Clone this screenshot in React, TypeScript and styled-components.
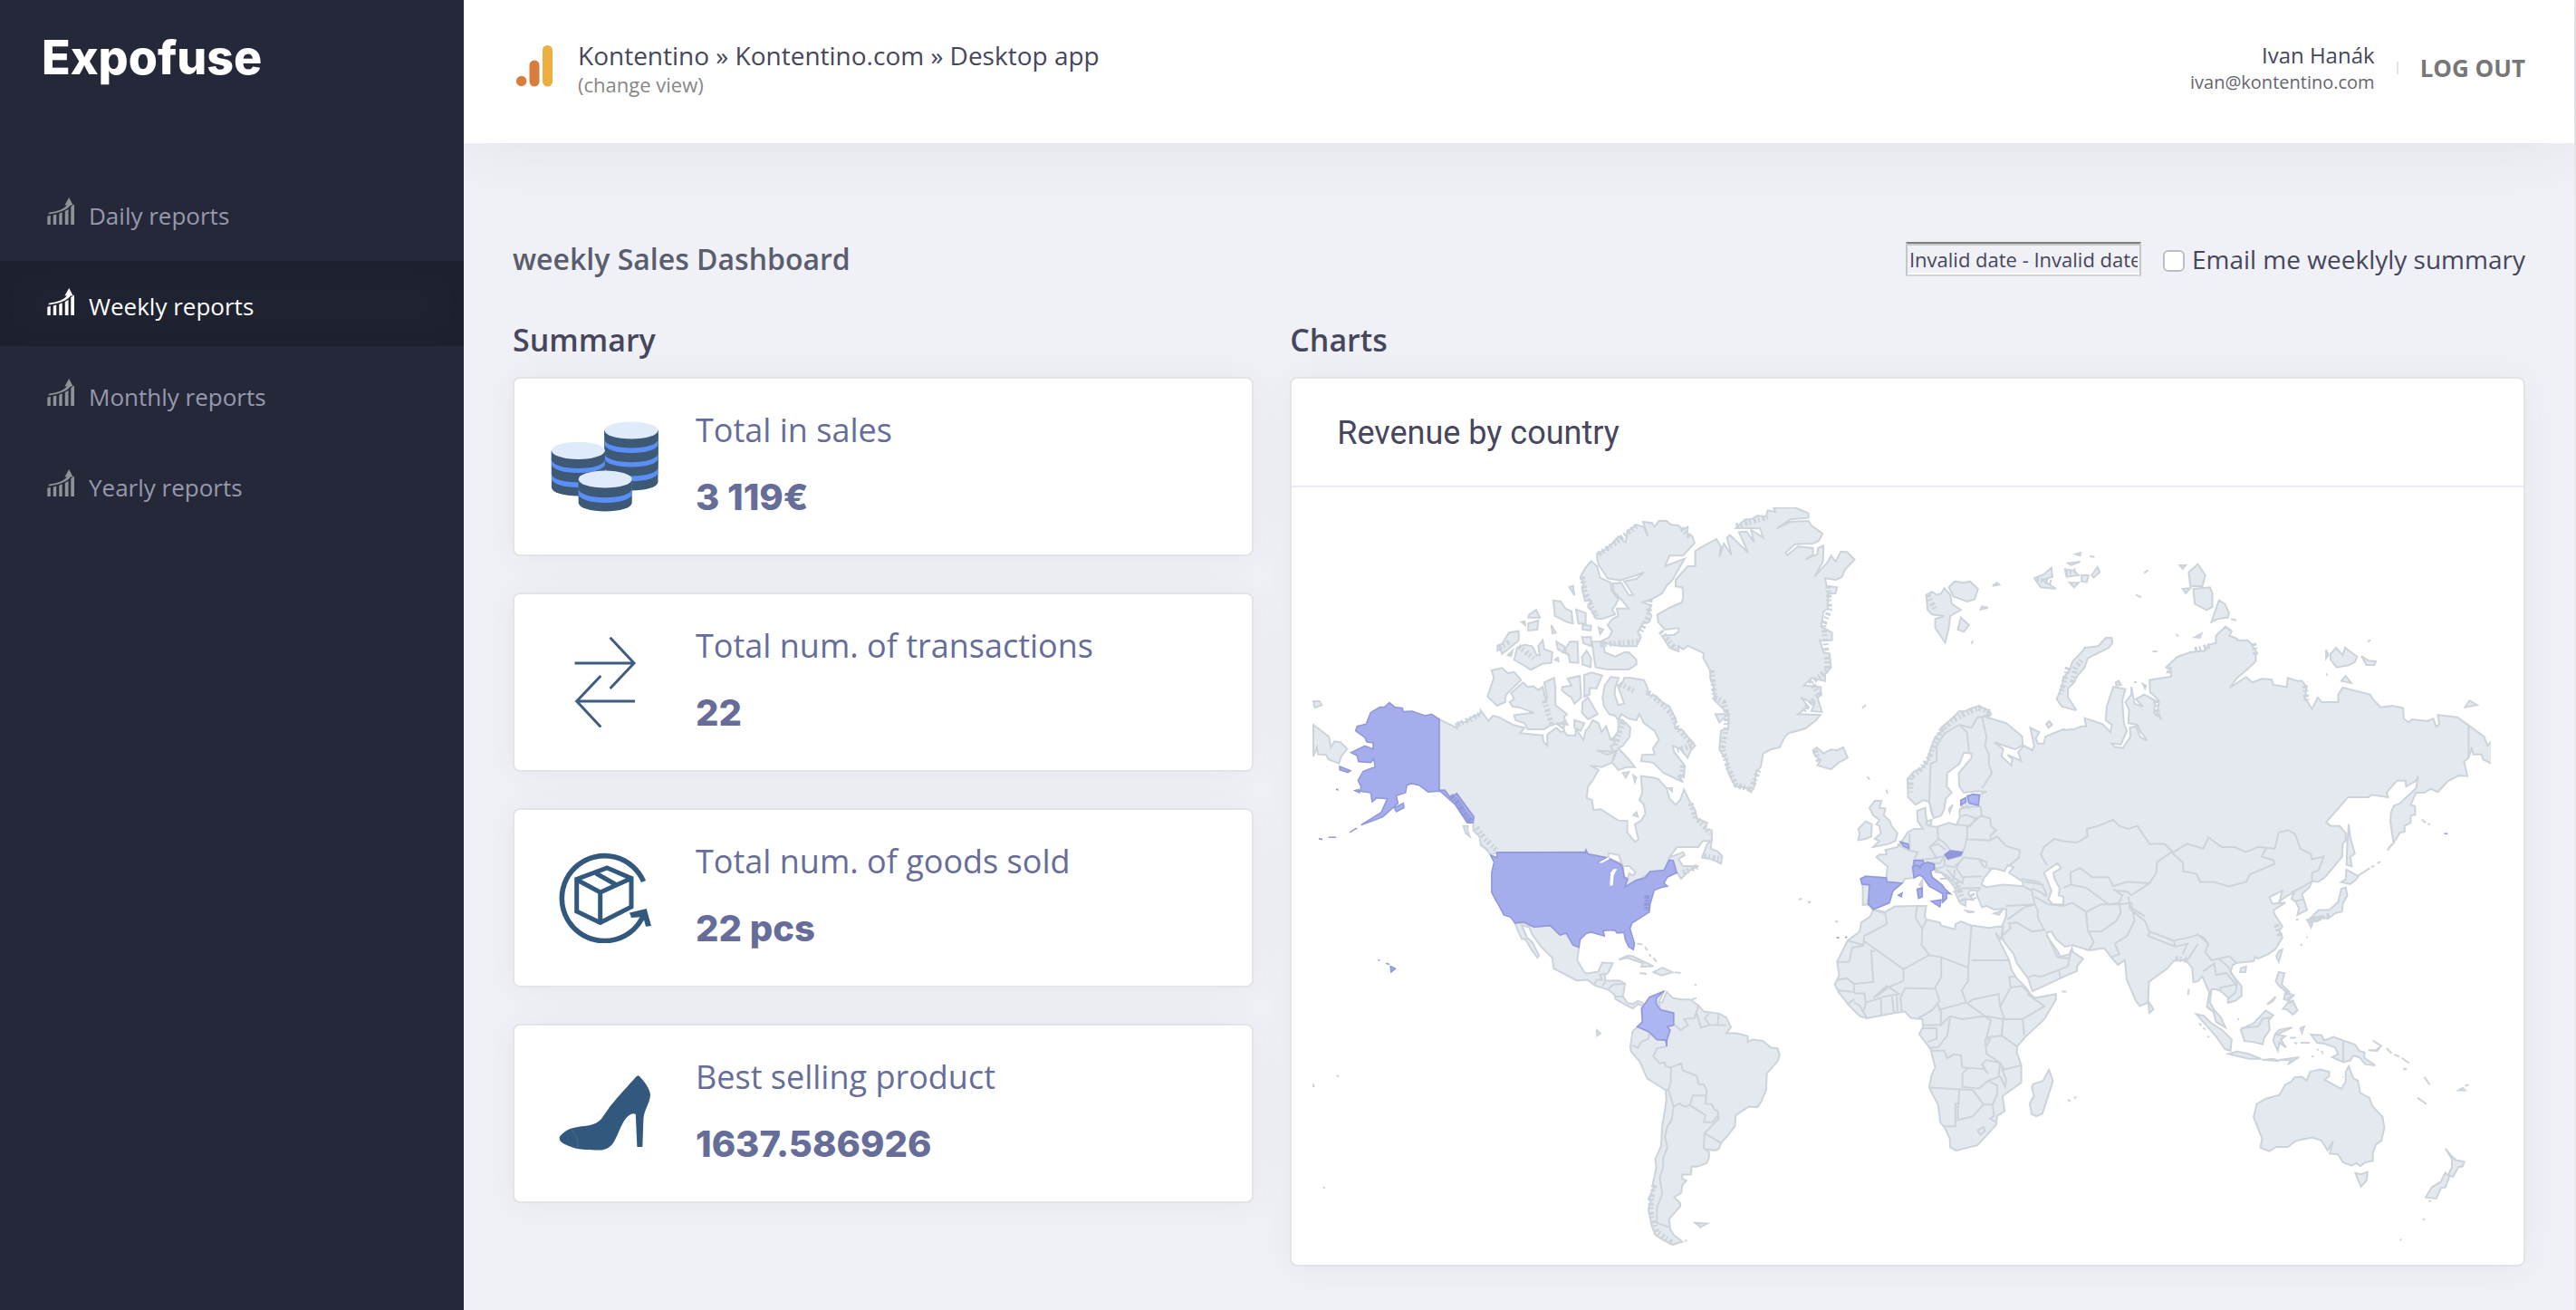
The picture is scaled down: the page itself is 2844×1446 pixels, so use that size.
import React from 'react';
import styled, { createGlobalStyle } from 'styled-components';

const sans = "'Open Sans', 'Noto Sans', sans-serif";
const display = "Inter, 'Open Sans', sans-serif";

const GlobalStyle = createGlobalStyle`
  *, *::before, *::after { box-sizing: border-box; }
  body {
    margin: 0;
    background: #f0f1f6;
    color: #46465c;
    font-family: ${sans};
  }
  h1, h2, h3, p, ul { margin: 0; padding: 0; }
`;

/* ---------- layout ---------- */

const Shell = styled.div`
  display: grid;
  grid-template-columns: 512px minmax(0, 1fr);
  min-height: 100vh;
`;

const Sidebar = styled.aside`
  z-index: 1;
  background: #252838;
  padding-top: 32px;
`;

const Logo = styled.a`
  display: block;
  padding: 0 46px;
  color: #fff;
  font-family: ${display};
  font-size: 52px;
  font-weight: 800;
  line-height: 64px;
  text-decoration: none;
`;

const NavList = styled.ul`
  display: grid;
  gap: 6px;
  margin-top: 92px;
  list-style: none;
`;

const NavLink = styled.a<{ $active?: boolean }>`
  display: flex;
  align-items: baseline;
  gap: 16px;
  height: 94px;
  padding: 30px 52px 0;
  color: ${(p) => (p.$active ? '#fff' : '#9899ac')};
  background: ${(p) => (p.$active ? '#202331' : 'transparent')};
  box-shadow: ${(p) => (p.$active ? 'inset 0 0 50px rgba(20, 20, 40, 0.25)' : 'none')};
  font-size: 26px;
  line-height: 36px;
  text-decoration: none;

  svg { color: ${(p) => (p.$active ? '#fff' : '#8e9196')}; }
`;

const Main = styled.main`
  border-right: 2px solid #e9e9ec;
`;

const Header = styled.header`
  display: flex;
  align-items: center;
  justify-content: space-between;
  height: 158px;
  padding: 0 54px 8px 58px;
  background: #fff;
  box-shadow: 0 0 80px rgba(69, 65, 78, 0.09);
`;

const HeaderGroup = styled.div<{ $gap: number }>`
  display: flex;
  align-items: center;
  gap: ${(p) => p.$gap}px;
`;

const ViewPath = styled.p`
  font-size: 28px;
  line-height: 36px;
`;

const ViewLink = styled.a`
  display: block;
  color: #868686;
  font-size: 22px;
  line-height: 28px;
  text-decoration: none;
`;

const UserBlock = styled.div`
  text-align: right;
`;

const UserName = styled.p`
  font-size: 24px;
  line-height: 32px;
`;

const UserMail = styled.p`
  color: #66666f;
  font-size: 20px;
  line-height: 28px;
`;

const Separator = styled.span`
  width: 2px;
  height: 14px;
  background: #e4e4e8;
`;

const LogoutButton = styled.button`
  padding: 0;
  border: 0;
  background: none;
  color: #777;
  font: 700 26px/36px ${sans};
  cursor: pointer;
`;

const Content = styled.div`
  padding: 106px 54px 40px;
`;

const Toolbar = styled.div`
  display: flex;
  align-items: center;
  justify-content: space-between;
  margin-bottom: 44px;
`;

const PageTitle = styled.h1`
  color: #5a5d6e;
  font-size: 32px;
  font-weight: 600;
  line-height: 44px;
`;

const Filters = styled.div`
  display: flex;
  align-items: center;
  gap: 24px;
`;

const DateInput = styled.input`
  width: 260px;
  height: 38px;
  padding: 0 2px;
  border: 2px solid;
  border-color: #7e7e7e #c6c6c6 #d4d4d6;
  border-radius: 0;
  background: transparent;
  box-shadow: inset 0 2px 0 #c8c8ca, inset 0 -2px 0 #fff;
  color: #46465c;
  font: 22px ${sans};
`;

const CheckLabel = styled.label`
  display: flex;
  align-items: center;
  gap: 8px;
  font-size: 28px;
  line-height: 38px;
`;

const Checkbox = styled.input`
  appearance: none;
  width: 24px;
  height: 24px;
  margin: 4px 0 0;
  border: 2px solid #bdbdc0;
  border-radius: 6px;
  background: #fff;
`;

const Columns = styled.div`
  display: grid;
  grid-template-columns: minmax(0, 3fr) minmax(0, 5fr);
  align-items: start;
  gap: 40px;
`;

const SectionTitle = styled.h2`
  margin-bottom: 18px;
  font-size: 34px;
  font-weight: 600;
  line-height: 46px;
`;

const Card = styled.div`
  border: 2px solid #e4e4e6;
  border-radius: 8px;
  background: #fff;
  box-shadow: 0 2px 40px rgba(69, 65, 78, 0.06);
`;

const CardStack = styled.div`
  display: grid;
  gap: 40px;
`;

const StatCard = styled(Card)`
  display: flex;
  align-items: center;
  gap: 40px;
  height: 198px;
  padding: 0 40px;
`;

const StatText = styled.div`
  display: grid;
  gap: 20px;
  color: #666d99;
`;

const StatLabel = styled.h3`
  font-size: 36px;
  font-weight: 400;
  line-height: 48px;
`;

const StatValue = styled.p`
  font-family: ${display};
  font-size: 40px;
  font-weight: 800;
  line-height: 60px;
`;

const ChartTitle = styled.h3`
  padding: 36px 50px 34px;
  border-bottom: 2px solid #ebecf1;
  font-family: Roboto, ${sans};
  font-size: 36px;
  font-weight: 400;
  line-height: 48px;
`;

const MapFrame = styled.div`
  padding: 22px 36px 20px 23px;
`;

const MapSvg = styled.svg`
  display: block;
  width: 100%;
  height: auto;
`;

/* ---------- icons ---------- */

const TrendIcon = () => (
  <svg width="30" height="30" viewBox="0 0 88 88" fill="currentColor" aria-hidden="true">
    <path d="M1 61l10-3v30H1zM20 57l10-3v34H20zM39 52l10-4v40H39zM58 44l11-6v50H58zM77 30l11-8v66H77z" />
    <path d="M5 49C36 44 55 38 64 24L57 25 71 0l13 25h-8C66 40 40 50 5 54z" />
  </svg>
);

const AnalyticsIcon = () => (
  <svg width="40" height="50" viewBox="0 0 40 50" aria-hidden="true">
    <circle cx="5.7" cy="39.5" r="5.7" fill="#d87d3c" />
    <rect x="14.5" y="16.5" width="11" height="29" rx="5.5" fill="#d87d3c" />
    <rect x="29" y="0" width="11" height="45.5" rx="5.5" fill="#edae41" />
  </svg>
);

const CoinStack = ({ x, top, layers }: { x: number; top: number; layers: number[] }) => (
  <g>
    {layers.map((bottom, i) => (
      <path
        key={bottom}
        d={`M${x - 29.5} ${top}V${bottom}a29.5 9.6 0 0 0 59 0V${top}z`}
        fill={i % 2 ? '#5a8ff8' : '#3e5975'}
      />
    ))}
    <ellipse cx={x} cy={top} rx="29.5" ry="9.6" fill="#dfebfb" />
  </g>
);

const CoinsIcon = () => (
  <svg width="120" height="100" viewBox="0 0 120 100" aria-hidden="true">
    <CoinStack x={89} top={10} layers={[67, 56.7, 51, 41, 35.7, 25.4, 20]} />
    <CoinStack x={30.4} top={32.3} layers={[73, 63.4, 58, 47.4, 42.4]} />
    <CoinStack x={60.2} top={64} layers={[90, 80.4, 74.7]} />
  </svg>
);

const TransferIcon = () => (
  <svg width="120" height="100" viewBox="0 0 120 100" fill="none" stroke="#3f5d7f" strokeWidth="3" aria-hidden="true">
    <path d="M26.500 29H92M65.600 .8L92 29 65.600 57M93 71H28.700M55.300 43L28.700 71 55.300 99.500" />
  </svg>
);

const GoodsIcon = () => (
  <svg width="120" height="100" viewBox="0 0 120 100" fill="none" stroke="#33587d" strokeWidth="5" aria-hidden="true">
    <path d="M102.500 32A47 47 0 1 0 103 68" strokeWidth="5.6" />
    <path d="M62.300 17L89 28.500V60L54.700 77.500 28.700 65V29.500zM28.700 30L54.700 44 89 28.500M54.700 44V77M50 23L73 36" />
    <path d="M87 66.500L105.700 62 111 81 105 81.700 102 71 89 72z" fill="#33587d" stroke="none" />
  </svg>
);

const HeelIcon = () => (
  <svg width="120" height="100" viewBox="0 0 120 100" fill="#33587d" aria-hidden="true">
    <path d="M98 9C104 15 110 24 110 30C109 40 103 46 102.400 56L101.300 87H95.400L93.800 51C90 48 83 54 80 60C76 67 74 74 70 81C66 88 60 90.500 54 90.500C42 90.500 28 90 20 86C12 83 9 80 9.700 76C15 69 22 66 30 65C40 63 49 64 56 56C62 48 65 42 70 37C78 27 87 18 93 11Q96 7 98 9z" />
    <path d="M23 68Q31 77 30 87" fill="none" stroke="#4a6d90" strokeWidth="1" />
  </svg>
);

/* ---------- world map ---------- */

type Sheet = { x: number; y: number; sx: number; sy: number };

/* The outline data is kept in six survey sheets, each with its own origin and scale. */
const sheets: Record<string, Sheet> = {
  A: { x: -39, y: -20, sx: 3, sy: 3 },
  B: { x: 351, y: -20, sx: 3, sy: 3 },
  C: { x: 831, y: -20, sx: 3, sy: 3 },
  D: { x: -29, y: 360, sx: 2.6133, sy: 3 },
  E: { x: 511, y: 300, sx: 3, sy: 3 },
  F: { x: 911, y: 300, sx: 3, sy: 2.8 },
};

/* "A 10,20 30,40 B 5,6 ; A 1,2 3,4": a letter switches the sheet, a semicolon starts a new line. */
const toPath = (source: string, closed: boolean) =>
  source
    .split(';')
    .map((line) => {
      let sheet = sheets.A;
      const points: string[] = [];
      line.trim().split(/\s+/).forEach((token) => {
        if (sheets[token]) {
          sheet = sheets[token];
          return;
        }
        const [u, v] = token.split(',').map(Number);
        points.push(`${(sheet.x + u / sheet.sx).toFixed(1)} ${(sheet.y + v / sheet.sy).toFixed(1)}`);
      });
      return `M${points.join('L')}${closed ? 'Z' : ''}`;
    })
    .join('');

const northAmerica = `
A 537,762 597,792 592,778 610,770 625,772 640,757 672,745 674,732 700,768 715,750 735,755 780,780 820,790 805,808 880,815 882,835 895,850 895,812 925,790 940,805 950,800 960,815 988,815 990,795 1015,830 1022,800 1035,785 1045,765 1065,775 1075,805 1090,785 1105,830 1118,820 1130,825 1140,850 1120,865 1110,905 1075,920 1037,915 1065,930 1045,965 1030,985 1025,1022 1043,1030 1048,1062 1072,1060 1130,1097 1160,1098 1160,1137 1185,1168 1197,1160 1185,1110 1205,1098 1220,1075 1215,1045 1200,1030 1210,1005 1205,950 1245,955 1262,960 1290,990 1300,1025 1320,1045 1335,1030 1348,995 1360,1020 1372,1045 1385,1065 1390,1090 1425,1105 1415,1125 1440,1130 1440,1165 1410,1165 1395,1185 1325,1185
D 1105,80 1145,62 1150,72 1132,85 1145,108 1190,108 1165,122 1140,150 1128,130 1050,130 985,180 968,177 908,100 865,62 608,64 590,70 575,50 560,38
A 700,1195 675,1178 670,1150 650,1130 650,1085 595,1008 575,1022 555,997 537,997;
D 1200,80 1210,50 1215,35 1228,22 1225,50 1245,60 1258,75 1255,100 1240,92 1222,84;
D 660,297 685,297 715,310 762,305 790,337 808,330 828,370 845,377 840,420 860,460 870,464 900,458 912,428 942,430 930,460 920,470 920,488 960,487 978,498 972,540 985,562 1000,565 1015,555 1030,562 1033,572 1048,543 1090,523 1075,560 1085,560 1098,525 1115,545 1140,550 1165,550 1190,570 1205,590 1250,597 1270,610 1283,642 1270,662 1300,662 1332,672 1332,690 1345,683 1375,687 1400,710 1418,712 1424,733 1418,755 1387,795 1385,850 1370,890 1360,907 1335,905 1297,933 1295,970 1275,1000 1255,1025 1248,1045 1238,1050 1207,1045 1220,1055 1220,1075 1213,1092 1185,1104 1170,1103 1168,1130 1143,1130 1143,1145 1155,1150 1143,1165 1140,1190 1120,1205 1137,1225 1137,1235 1105,1277 1108,1310 1118,1330 1143,1352 1115,1362 1085,1345 1065,1330 1055,1300 1045,1245 1052,1220 1045,1212 1062,1170 1058,1160 1068,1105 1065,1080 1082,1035 1085,970 1097,885 1095,850 1042,812 1020,755 995,722 993,705 1000,655 1015,640 1028,625 1025,580 1030,573 1015,565 1000,580 970,562 950,548 948,535 930,518 890,503 870,485 838,487 772,448 768,412 735,375 710,335 700,310 680,305 695,345 710,360 730,405 725,412 708,385 690,350 680,350 672,330`;

const arctic = `
A 710,600 745,592 765,610 785,605 808,632 758,680 755,705 728,717 697,686 718,624;
A 775,675 815,640 830,655 848,652 865,665 880,655 890,700 895,690 885,640 917,625 922,655 922,715 960,745 950,755 962,780 930,775 900,785 885,795 830,795 820,775 790,765 785,748 850,740 800,722 780,720 770,705 785,695;
A 945,655 975,650 962,628 1003,618 1007,690 985,710 975,690 960,680 943,665;
A 1017,615 1042,607 1077,617 1058,660 1035,658 1035,680 1018,688;
A 1012,705 1030,690 1062,745 1030,762 1010,740;
A 1105,622 1132,625 1120,655 1118,680 1130,715 1150,710 1128,650 1145,640 1150,625 1172,625 1215,632 1228,660 1225,680 1255,685 1275,705 1300,720 1320,760 1318,790 1345,800 1360,820 1385,850 1370,865 1360,890 1335,860 1310,850 1315,870 1350,915 1348,955 1330,950 1345,970 1280,940 1245,905 1205,900 1210,880 1250,878 1245,858 1265,830 1250,800 1215,775 1200,745 1190,765 1165,760 1140,745 1130,765 1120,750 1100,745 1082,718 1078,690 1085,650;
A 1130,762 1145,765 1170,790 1168,820 1145,850 1130,858 1165,895 1185,920 1160,920 1130,930 1110,905 1125,865 1095,880 1060,865 1115,870 1105,850 1120,845 1112,830 1130,800;
A 1043,505 1080,505 1085,540 1120,555 1150,540 1165,540 1190,565 1190,580 1165,597 1095,597 1055,590 1050,560;
A 1060,213 1080,205 1110,180 1130,157 1145,170 1155,175 1160,140 1190,117 1215,125 1228,155 1212,108 1242,112 1250,125 1265,104 1290,105 1305,118 1330,120 1345,135 1360,125 1360,150 1375,155 1383,178 1345,220 1300,220 1285,255 1350,230 1330,265 1310,300 1290,320 1275,345 1245,362 1210,375 1240,385 1230,405 1240,420 1232,440 1210,445 1195,475 1205,490 1190,520 1140,520 1110,515 1070,505 1100,490 1110,470 1095,450 1110,430 1130,420 1125,395 1165,395 1140,365 1115,340 1112,312 1140,310 1165,350 1180,350 1150,305 1190,297 1215,275 1190,285 1135,302 1095,295 1065,250 1060,230;
A 1040,238 1060,255 1070,293 1105,310 1108,335 1130,365 1120,385 1110,400 1120,415 1075,430 1055,428 1045,405 1030,390 1040,370 1020,370 1010,330 1015,315 1005,290 1020,262;
A 915,368 940,372 955,395 975,405 980,445 960,440 920,420;
A 990,398 1022,410 1022,445 998,445; A 835,415 858,400 870,425 832,425; A 832,445 865,435 862,465 832,468;
A 768,475 800,470 800,500 765,530 745,545 740,530 730,535 730,518 745,512;
A 785,565 795,525 820,515 845,520 860,550 870,550 865,520 880,500 885,530 912,540 908,575 880,578 840,598 820,585;
A 970,505 995,505 998,575 970,573 965,545 945,540 960,520; A 1010,490 1040,490 1040,520 1015,510;
A 1010,555 1025,535 1040,560 1038,590 1012,580; A 968,325 980,320 985,352; A 908,450 923,475 912,478;
A 1012,450 1040,452 1038,468 1012,465; A 1065,458 1080,465 1070,480; A 920,565 930,558 932,570;
A 925,505 950,520 958,545 930,530; A 985,765 1018,775 1005,800 985,790; A 930,780 950,770 950,795;
A 1145,940 1165,937 1155,955; A 1180,1080 1190,1070 1195,1085; A 1297,990 1308,990 1308,1000; A 810,440 820,437 822,450;
A 617,1115 632,1115 630,1130 638,1150 625,1140; A 1180,948 1190,955 1185,970; A 765,550 780,535 775,553;
A 120,780 172,820 178,855 190,835 210,838 232,860 212,885 205,908 170,895 162,880 135,878 132,855 120,885;
A 120,702 140,702 148,715 125,724;
B 230,195 285,165 300,190 295,225 310,180 335,218 320,160 330,152 390,210 360,142 385,140 410,175 400,135 440,160 430,130 350,128 380,100 400,100 420,88 450,90 455,70 480,75 475,62 545,60 590,80 590,95 530,100 485,130 530,108 590,105 600,120 637,147 625,170 605,180 545,182 515,210 520,218 555,190 605,195 605,215 580,233 620,215 622,195 640,187 638,240 610,290 655,240 665,220 680,240 697,207 718,208 743,233 712,265 700,292 680,300 645,295 650,320 685,325 680,345 655,345 655,395 640,405 632,455 668,475 668,500 628,500 640,540 660,545 665,590 645,612 645,635 600,625 575,650 630,655 633,680 620,690 635,738 600,735 610,710 565,690 590,720 555,745 630,748 615,765 580,793 525,808 512,820 495,855 465,862 440,875 432,920 418,935 410,985 400,1003 385,990 360,985 350,985 335,960 320,925 320,900 295,862 300,800 325,790 325,745 290,710 280,700 275,650 265,625 265,600 242,560 242,543 190,518 175,530 160,520 160,537 130,525 105,485 145,482 160,472 160,460 115,465 92,440 90,415 135,390 170,375 175,360 173,325 150,322 150,300 190,255 215,255 215,205;
B 282,745 325,745 295,772; B 605,865 618,855 640,875 665,862 685,865 705,855 720,890 690,905 665,928 620,915 630,898 612,882;
B 980,350 1000,340 1015,350 1030,345 1040,328 1060,350 1065,380 1095,400 1060,420 1055,460 1043,508 1010,460 1010,430 1040,420 1000,415 985,400;
B 1055,325 1075,305 1105,310 1125,305 1152,330 1140,365 1115,372 1070,355; B 1095,425 1122,450 1105,472 1085,465;
B 1200,320 1215,310 1222,316; B 1160,398 1165,388 1185,392; B 768,725 780,715; B 1130,512 1135,502;
B 1338,295 1370,282 1395,260 1398,290 1365,300 1410,330 1360,325;
C 0,265 30,270 45,285 5,290; C 55,285 78,285 72,308 55,305; C 88,285 108,258 115,275 95,292; C 15,310 45,310 30,325; C 10,245 50,240 20,252; C 35,215 52,210 50,220;
C 440,248 465,285 455,322 415,320 410,275; C 425,330 480,325 488,345 488,390 470,400 430,380; C 390,330 415,328 400,345;
C 510,368 530,380 543,410 540,425 505,430 485,440; C 380,252 400,252 390,264; C 262,278 275,268; C 430,490 452,478 447,492; C 235,350 252,358; C 368,480 375,488; C 290,537 305,537; C 550,430 568,434; C 82,222 98,224; C 1002,505 1012,500; C 865,610 870,617;
C 155,492 157,510 145,525 75,560 65,590 40,620 30,640 10,660 10,690 37,730 B 1475,732 1430,720 1412,695 1430,655 1435,625 1455,600 1465,570 1500,535 C 65,525 110,520 135,492;
C 880,545 898,525 920,550 928,525 968,555 960,572 940,583 900,590 880,565; C 982,552 1005,568 1030,570 1025,582 998,582; C 915,635 930,618 948,642; C 865,532 872,550 865,560;
C 1325,722 1340,700 1365,715; B 1378,778 1388,768 1398,780 1385,790; C 168,640 178,635 185,648 170,650; C 228,640 238,638; C 258,645 268,650 265,660`;

const eurasia = `
B 1030,790 1065,760 1090,735 1110,735 1130,725 1155,718 1190,735 1195,745 1170,752 1245,775 1298,818 1300,848 1275,862 1205,838 1235,860 1230,885 1262,915 1265,895 1250,880 1295,900 1285,870 1305,850 1332,865 1338,850 1325,790 1355,805 1343,825 1350,842 1370,842 1375,820 1435,795
C 0,797 30,795 55,785 70,785 65,758 125,778 150,805 155,780 135,765 138,720 160,655 200,662 190,700 195,775 205,800 185,845 155,842 163,853 192,857 217,820 215,790 235,785 250,822 272,832 248,800 240,780 210,775 212,730 200,705 220,680 220,655 230,710 258,720 235,695 262,680 300,700 295,740 320,762 305,740 312,700 282,672 280,632 352,620 350,600 335,590 372,555 415,540 465,535 475,515 500,510 500,485 532,455 552,470 545,485 570,495 570,500 605,500 615,510 632,535 632,570 600,600 570,625 545,658 600,622 620,640 652,628 685,630 690,648 735,655 738,625 770,635 785,635 800,655 795,690 818,728 837,690 850,705 905,705 905,680 920,657 1010,680 1020,695 1045,722 1085,717 1120,725 1122,760 1138,772 1150,762 1200,768 1220,760 1230,787 1240,778 1235,748 1300,755 1337,782 1388,820 1400,850 1415,832 1415,910 1385,895 1380,878 1352,878 1348,855 1337,890 1322,902 1333,950 1305,948 1268,967 1235,1003 1212,993 1190,1005 1163,1005 1145,1045 1160,1050 1160,1078 1145,1082 1145,1105 1125,1115 1125,1135 1110,1137 1088,1172 1078,1100 1080,1070 1090,1048 1108,1042 1163,990 1170,950 1160,968 1130,985 1128,965 1100,965 1065,1005 1070,1020 1015,1012 1005,1020 938,1020 865,1103 880,1115 910,1115 930,1140
F 690,190 680,200 678,240 620,305 598,318 578,315 570,335 545,355 562,405 530,420 535,400 525,380 510,370 520,350 495,362 470,378 480,345 437,365 447,385 490,382 452,405 452,415 480,455 470,470 480,490 458,525 435,540 400,555 390,550 385,563 330,568 315,575 308,598 345,640 345,670 325,685 300,692 300,675 275,655 260,650 245,650 240,690 255,715 275,735 292,768 260,750 252,720 230,705 238,660 215,610 200,625 185,628 182,585 160,560 120,562 100,585 38,627 35,690
E 1225,745 1208,752 1195,735 1165,665 1158,600 1135,615 1113,590 1090,560 1040,567 985,550 960,555 930,530 915,505 900,508 900,520 935,570 945,588 975,580 983,560 985,572 1020,595 1000,620 1000,635 945,660 852,703 838,660 800,610 790,580 755,535 750,490 765,455 765,430 750,430 725,432 700,420 685,425 675,400 668,385 668,370 645,368 640,380 655,400 632,398 630,420 612,410 600,385 595,360 580,340 550,310 530,308 527,290 470,310 460,327 430,330 420,345 390,370 378,410 325,432 310,415 290,417 290,350 283,330 300,322 368,327 372,290 335,258 345,250 370,250 365,235 405,225 418,208 440,175 460,165 490,165 472,140 470,105 497,95 500,130 510,155 535,158 575,145 600,152 612,125 610,105 622,90 640,95 625,75 637,55 680,50 700,42
B 1150,1000 1105,1005 1090,985 1088,940 1130,890 1130,875 1105,872 1090,910 1050,940 1048,985 1065,1005 1045,1025 1040,1060 1030,1080 1005,1090 990,1035 970,1030 945,1045 920,1020 918,960 940,935 965,925 985,900 995,860 1010,820 1040,795`;

const africa = `
E 325,432 315,455 285,475 280,505 240,535 205,605 212,650 197,680 210,705 240,745 280,785 303,792 395,775 430,770 450,792 487,795 490,820 477,845 515,895 530,955 518,980 510,1022 540,1080 547,1137 562,1155 578,1190 580,1220 600,1230 670,1213 732,1145 735,1115 760,1100 753,1050 815,1005 815,948 800,905 802,885 828,855 892,795 930,730 930,712 860,725 845,712 830,690 800,660 782,630 775,600 745,540 730,510 748,530 755,490 740,488 710,493 650,485 615,472 598,480 595,497 550,485 545,475 500,465 495,455 500,420 470,420 395,422 365,440;
E 907,963 920,1000 885,1108 865,1117 850,1110 843,1075 857,1050 850,1020 855,1010 887,1000`;

const islands = `
E 330,72 352,72 345,95 365,98 360,120 380,140 385,155 405,180 398,205 375,215 325,225 345,205 330,198 350,180 345,155 335,150 345,135 325,120 312,95;
E 275,165 300,140 320,150 318,190 300,198 275,202 280,180; E 632,436 660,440 640,442; E 725,445 752,435 740,450; E 487,335 487,355 478,350;
E 1235,735 1253,762 1240,775; E 502,140 518,135 515,155 500,150; E 575,100 588,85 578,110; E 1370,695 1368,715;
E 78,398 88,398; E 108,407 118,407; E 198,472 208,472; E 950,704 965,704; E 970,1062 978,1068; E 990,1057 998,1053; E 368,35 372,48;
F 470,530 480,527 468,565 460,548; F 342,585 360,580 358,597 340,597; F 468,597 487,600 478,635 505,660 490,655 470,640 458,625;
F 500,690 515,685 530,715 515,728 495,712 482,710; F 490,660 518,668 500,685 485,680; F 430,697 458,672 450,685;
F 195,727 220,732 245,755 280,775 312,805 308,840 290,835 260,795; F 302,850 330,842 370,850 410,865 370,865; F 412,868 450,865 470,872; F 470,868 535,860 498,882 510,870;
F 342,775 355,768 385,755 425,715 450,730 435,745 438,775 420,800 415,820 380,812 355,810; F 470,775 512,768 480,782 465,790 490,795 475,805 492,830 470,815 465,840 450,810 455,790;
F 540,770 552,765 545,785; F 505,800 525,800; F 540,815 570,815; F 520,815 530,818; F 578,860 583,855; F 610,840 614,850; F 595,835 600,838;
F 575,790 610,792 618,808 650,797 682,808 720,820 735,840 752,845 752,862 788,885 755,882 735,860 715,855 705,870 682,875 645,860 665,850 655,830 620,818 595,815;
F 765,838 790,838 808,825 780,808 806,825 795,840; F 692,280 732,300 725,310 705,325 675,318 690,310; F 690,335 695,360 680,385 678,410 655,415 630,432 610,425 575,428 600,405 635,405 665,380 675,340;
F 562,435 585,432 575,458; F 590,430 612,430 595,440; F 700,140 705,180 720,230 705,240 710,270 693,265 695,200; F 732,298 770,275; F 775,272 785,268; F 795,260 805,255; F 828,220 835,210 845,200; F 942,125 955,135; F 962,138 970,140;
F 825,832 842,848; F 850,852 868,858; F 875,862 900,878; F 880,895 892,898; F 950,920 968,945; F 928,985 958,1005; F 1065,962 1078,955 1085,962; F 1085,948 1098,945;
F 722,1218 740,1222 762,1215 760,1240 740,1260; F 1020,1142 1040,1165 1055,1178 1083,1183 1078,1197 1063,1200 1045,1230 1030,1222 1042,1200 1042,1175; F 1020,1217 1033,1230 1020,1262 1005,1265 990,1297 955,1293 975,1262 1005,1245; F 945,1362 952,1360; F 870,1423 875,1425; F 965,1303 972,1306;
F 540,515 545,510; F 560,490 565,488; F 205,755 212,762; F 218,768 225,775; F 232,795 238,798; F 332,740 336,745; F 525,434 533,434;
F 395,1005 425,988 470,977 490,945 510,935 520,922 545,920 560,932 572,905 605,898 635,905 635,918 620,930 675,958 690,935 690,905 700,888 715,925 730,932 738,970 768,985 778,1010 812,1045 818,1078 808,1118 790,1130 780,1155 780,1180 755,1185 738,1197 725,1187 710,1195 680,1185 665,1160 637,1158 648,1120 630,1148 610,1118 580,1108 525,1118 498,1137 460,1137 437,1150 407,1140 413,1112 400,1080 385,1045 390,1025;
D 960,418 985,405 1000,407 1060,440 1025,442 1030,430 985,412; D 1060,460 1085,445 1115,460 1083,470; D 1180,1290 1215,1292 1195,1305 1190,1298; D 1122,460 1138,462; D 1020,462 1040,465; D 897,652 907,662 897,670; D 1013,365 1028,368; D 1035,375 1042,388; D 1048,400 1052,408; D 1060,412 1068,425; D 1178,500 1184,503; D 1170,550 1184,545;
D 65,836 78,832 80,838; D 145,803 152,804; D 109,1170 111,1176; D 1480,217 1488,217; D 1506,228 1514,228; D 1150,1349 1156,1350; B 785,952 793,962; F 680,920 682,922`;

const borders = `
D 1048,660 1045,680 1025,690 1015,710 998,702; D 1048,660 1070,683 1098,685 1098,705 1070,712 1060,738 1078,762 1092,758 1095,772 1110,775 1110,820 1103,850 1095,850;
D 1110,775 1140,762 1145,785 1185,803 1190,830 1205,832 1213,850 1210,895 1228,897 1235,915 1245,920 1248,945 1207,993 1255,1025; D 1207,993 1205,1045;
D 1103,850 1118,905 1135,895 1150,905 1165,900 1173,868 1210,868; D 1165,900 1210,933 1205,957 1230,957 1245,935;
D 1118,905 1112,950 1100,970 1093,1005 1100,1040 1088,1075 1088,1105 1078,1140 1085,1195 1070,1240 1070,1290 1108,1305;
D 1075,560 1080,583 1118,595 1118,630 1138,652 1160,635 1148,615 1178,612 1190,570; D 1183,590 1197,643 1222,635 1270,635; D 1222,635 1208,612 1220,597; D 1245,635 1248,600;
D 890,500 895,485 912,485 905,468 922,465; D 930,515 945,500 978,498; D 952,540 972,540; D 912,505 922,492;
C 1337,782 1337,890;
E 405,215 440,235 472,243 460,268 455,295 460,325; E 537,158 540,200 512,225 535,262 465,268; E 445,180 445,230; E 515,222 540,215 565,235; E 600,150 635,155 637,185 628,225 620,240; E 540,197 562,212 580,235;
E 525,262 562,255 545,280 500,275; E 562,260 560,285 590,292 612,275 625,258; E 527,298 560,290; E 612,272 600,295 620,325 685,322; E 625,260 675,265 690,290 700,292; E 675,265 700,275 700,290;
E 637,200 712,203 735,190 765,222 810,235 808,260 770,290; E 637,160 680,122 712,130 715,155 732,170 715,185 712,203; E 612,125 630,118 665,130 685,122 680,90; E 610,100 640,92 680,90; E 645,158 665,130;
E 530,300 570,320 590,340 595,300; E 570,300 590,325 620,345 625,325; E 590,375 620,362 680,360; E 600,345 610,372; E 680,360 670,372; E 545,330 575,330; E 290,350 318,350 305,415;
B 1000,1080 990,1035 995,910 1015,900 1015,850 1040,810 1090,780 1115,805 1122,870; B 1090,780 1130,790 1150,755 1195,750; B 1165,752 1180,820 1175,850 1188,880 1188,910 1198,940 1165,990;
E 765,420 860,415 850,370 825,357; E 770,465 825,425 860,415 870,435 870,460 892,500 850,505 800,475 775,478 780,495 755,515; E 838,658 855,650 880,655 940,632 945,660; E 940,632 970,620 975,595 935,590 900,515; E 975,595 980,565;
E 860,390 905,415 955,420 985,410 1030,440 1035,500 1055,540 1040,565; E 825,340 885,350 900,385; E 850,362 880,375 900,390; E 815,330 870,340 890,355;
E 900,285 880,250 890,225 925,198 950,205 1000,210 1035,190 1032,165 1070,155 1120,135 1140,155 1170,165 1200,155 1240,215 1290,215 1315,240 1265,275 1262,310 1240,345 1180,385; E 980,350 978,310 1010,295 1050,325 1105,325 1120,355 1165,340 1240,345;
E 955,360 980,350 1030,360 1105,415 1140,410 1150,385 1120,365; E 1130,370 1165,372 1180,385; E 1030,440 1080,415 1140,415 1145,440 1130,470 1080,505 1035,505; E 1140,415 1180,410 1190,470 1165,520 1125,545 1140,580 1113,590;
E 1170,390 1175,430 1225,470 1240,505 1320,535 1325,555 1235,520 1240,505; E 1320,535 1370,525 1400,515 1435,545; E 1170,420 1225,455; E 1325,555 1365,545 1350,580;
F 115,228 165,200 218,215 235,180 278,210 320,210 360,225 400,210 455,215 468,165 500,158 522,170 540,215 575,232 578,248 617,240 600,282 578,290 578,315; F 115,228 150,258 152,285 195,293 208,318 255,318 302,332 360,318 372,295 455,262 450,250 412,240 425,215;
F 578,315 545,335 510,350; F 520,378 548,372; F 195,480 220,490 235,510 225,535 245,560 305,548 330,570; F 200,510 165,560; F 217,595 255,570 260,605 295,600 325,635 275,645 275,655; F 268,555 300,580 330,630 325,660 300,680; F 232,705 255,720; F 342,770 400,765 415,740 440,738; F 682,808 682,872;
E 320,432 365,445 370,480 295,520 292,550 240,535; E 292,552 255,558 245,605 205,607; E 292,535 425,630 510,583 550,590 640,625 650,485; E 470,420 465,460 487,495 485,550 510,583; E 487,497 502,465; E 650,600 778,600;
E 640,625 638,670 618,700 632,740 540,765; E 550,590 550,655 530,690 545,740; E 330,570 318,568 325,672 260,678 238,660 207,665; E 425,630 425,668 375,690 335,720; E 260,678 262,705 205,700; E 262,710 295,710 300,740 295,765; E 262,740 280,750 303,790; E 240,745 262,730;
E 300,740 350,725 352,785; E 325,725 370,685 410,712 355,722; E 387,720 393,775; E 403,718 405,770; E 420,770 415,725 430,692 530,695; E 545,735 520,765 475,792; E 535,740 550,770 548,815 490,815;
E 632,740 695,785 755,795 820,795 892,752 835,712; E 640,740 655,730 740,712 745,755 760,795; E 745,755 780,690 775,655 800,655; E 780,690 815,685 845,712; E 820,795 825,850; E 755,795 750,850 800,885; E 750,850 700,855 715,800 695,785; E 548,815 580,785 620,795 695,785;
E 580,785 570,850 540,888 515,890; E 490,825 535,825 535,860 505,870; E 515,900 560,900 570,925 590,912 615,915 620,955 690,960 705,975 685,945 700,930; E 640,955 620,975 620,1020 675,1025 705,1000 745,985; E 510,1022 615,1028 655,1030; E 610,1030 607,1075 597,1075 597,1150 562,1150;
E 605,1080 605,1130 655,1117 690,1078 655,1030; E 690,1078 720,1078 735,1045 735,1015 705,1000; E 720,1078 725,1115 712,1125 730,1135; E 700,930 745,940 740,985; E 745,940 760,962 815,948; E 745,985 762,1020 765,995 750,955; E 695,860 700,910 745,940; E 670,1165 690,1152 695,1165 680,1178 670,1165; E 695,865 715,855 700,885`;

const seas = `
E 705,295 715,300 690,330 683,350 700,358 755,350 822,355 820,340 775,310 790,292 770,285 760,305 735,298;
E 890,310 935,278 947,295 922,310 925,330 942,360 940,385 955,390 955,415 920,415 905,400 915,370 905,345;
D 972,108 990,108 1008,128 1000,140 990,132 985,155 975,140; D 908,97 930,78 930,65 960,72 968,100 935,85`;

/* Ragged, island-strewn coasts that read as a darker serrated edge. */
const fjords = `
B 1190,738 1155,724 1110,742 1065,768 1030,800 1010,835 992,885 965,925 930,955 928,1005;
B 270,600 280,690 310,705 320,745 318,790 305,860 325,925 350,980 400,995 425,930;
B 655,320 660,400 640,450 650,540 652,600 600,640 625,680 572,735; B 350,122 400,108 455,92; B 100,470 150,530;
B 612,865 625,905; B 985,350 1010,400; B 1345,298 1400,310; B 1450,590 1425,680;
A 725,1195 690,1160 660,1120; A 1010,290 1020,340 1040,390 1060,425; A 1065,215 1110,185 1160,145 1190,122; A 1340,130 1370,160;
A 1235,365 1230,420 1200,480; A 1070,515 1195,505; A 1228,672 1275,710 1310,750 1325,790 1378,848 1325,865; A 1345,915 1340,960; A 1135,645 1185,670; A 1145,770 1120,850;
A 597,780 640,762 672,745; A 885,700 910,780; A 1370,1040 1385,1085 1435,1140; A 800,520 850,560; A 735,525 770,505;
D 1062,1165 1052,1220 1055,1270 1070,1320 1112,1355; D 1205,75 1255,85; D 1145,130 1190,108;
C 345,610 345,580; C 430,532 480,520; C 25,640 35,590 60,560; C 625,510 632,550; C 795,650 800,700; C 300,700 308,750;
F 570,440 640,420; F 495,660 515,700; F 460,450 475,490; F 125,555 165,560; E 600,340 625,410; E 650,380 660,400; C 0,275 35,270`;

const sales = [
  {
    country: 'United States',
    fill: '#a6adec',
    shape: `
D 608,63 863,63 865,55 870,68 925,80 898,98 935,85 968,105 972,120 975,145 985,150 978,177 1010,155 1035,147 1050,126 1090,122 1105,88 1117,90 1127,130 1100,145 1090,165 1100,175 1085,178 1062,188 1050,235 1048,260 1035,270 998,297 992,315 1005,365 1002,385 988,375 978,350 975,328 955,330 948,320 915,322 918,340 880,327 865,332 848,352 845,377 828,370 808,330 790,337 762,305 715,310 685,293 660,297 648,278 628,270 612,235 605,222 593,195 593,130 600,95 590,73 608,80;
A 537,762 512,745 490,750 447,735 417,737 415,725 390,722 372,707 355,722 340,722 310,740 295,778 265,785 260,800 290,822 297,837 318,840 318,860 290,850 245,872 265,882 270,902 310,905 320,893 325,920 310,925 285,935 268,965 278,985 275,1000 310,1005 315,1035 330,1022 365,1025 345,1070 278,1112 350,1085 400,1040 395,1015 425,1005 430,980 445,975 470,980 500,1003 537,1000;
A 537,997 555,997 575,1022 595,1008 652,1085 648,1105 630,1105 610,1075 590,1045; A 207,918 243,932 235,938 208,930; A 388,1055 418,1040 420,1055 395,1068; A 258,998 270,995 272,1005; A 240,1137 265,1122; A 170,1153 195,1153; A 138,1157 150,1160; A 195,993 203,997;
D 301,440 315,448 303,459; D 288,430 298,434; D 265,419 270,420; C 1256,1141 1268,1141`,
  },
  { country: 'Colombia', fill: '#adb5f2', shape: 'D 1048,543 1090,523 1068,545 1068,565 1080,585 1118,595 1118,635 1100,640 1108,652 1098,685 1098,705 1095,685 1070,683 1048,658 1013,640 1028,625 1026,580' },
  { country: 'Spain', fill: '#a6adec', shape: 'E 283,330 300,322 368,327 370,340 420,345 390,370 378,410 325,432 308,415 312,350 287,348; E 408,385 420,378 418,390; E 203,526 212,525; E 232,526 238,522' },
  { country: 'Switzerland', fill: '#adb5f2', shape: 'E 460,270 490,270 493,280 483,290 460,287' },
  { country: 'Italy', fill: '#a6adec', shape: 'E 455,290 470,285 480,295 485,283 505,276 527,282 527,298 515,305 520,325 555,352 560,362 580,380 567,378 568,395 555,408 555,380 510,355 490,325 478,318 460,327; E 518,405 550,400 545,423; E 470,365 487,360 487,390 475,395' },
  { country: 'Slovakia', fill: '#8f97da', shape: 'E 562,250 580,237 620,242 615,253 572,265' },
  { country: 'Belgium', fill: '#adb5f2', shape: 'E 415,208 440,215 443,230 425,222' },
  { country: 'Estonia', fill: '#adb5f2', shape: 'E 637,57 655,50 677,54 673,87 642,80; E 615,70 630,62 632,75 615,87' },
];

const WorldMap = () => (
  <MapSvg viewBox="0 0 1301 816" role="img" aria-label="Revenue by country">
    <g fill="#e4e9f0" stroke="#cdd3da" strokeWidth="2">
      <path d={toPath(northAmerica, true)} />
      <path d={toPath(arctic, true)} />
      <path d={toPath(eurasia, true)} />
      <path d={toPath(africa, true)} />
      <path d={toPath(islands, true)} />
      <path d={toPath(borders, false)} fill="none" />
      <path d={toPath(seas, true)} fill="#fff" />
      <path d={toPath(fjords, false)} fill="none" strokeWidth="6" strokeDasharray="3 2 2 3" />
    </g>
    {sales.map((item) => (
      <path key={item.country} d={toPath(item.shape, true)} fill={item.fill} stroke="#9199d9" strokeWidth="1.6" />
    ))}
    <path
      d={toPath('A 575,1015 600,1040 620,1075 642,1100; D 1042,205 1040,255', false)}
      fill="none"
      stroke="#9199d9"
      strokeWidth="6"
      strokeDasharray="4 1 2 1"
    />
    <path
      d={toPath('D 945,118 955,118 945,140 943,172 934,174 936,130; D 900,98 930,78 932,86 912,98', true)}
      fill="#fff"
    />
  </MapSvg>
);

/* ---------- page ---------- */

const reports = ['Daily reports', 'Weekly reports', 'Monthly reports', 'Yearly reports'];

const stats = [
  { label: 'Total in sales', value: '3 119€', Icon: CoinsIcon },
  { label: 'Total num. of transactions', value: '22', Icon: TransferIcon },
  { label: 'Total num. of goods sold', value: '22 pcs', Icon: GoodsIcon },
  { label: 'Best selling product', value: '1637.586926', Icon: HeelIcon },
];

export default function App() {
  return (
    <>
      <GlobalStyle />
      <Shell>
        <Sidebar>
          <Logo href="#">Expofuse</Logo>
          <nav aria-label="Reports">
            <NavList>
              {reports.map((name) => (
                <li key={name}>
                  <NavLink href="#" $active={name === 'Weekly reports'}>
                    <TrendIcon />
                    {name}
                  </NavLink>
                </li>
              ))}
            </NavList>
          </nav>
        </Sidebar>
        <Main>
          <Header>
            <HeaderGroup $gap={28}>
              <AnalyticsIcon />
              <div>
                <ViewPath>Kontentino » Kontentino.com » Desktop app</ViewPath>
                <ViewLink href="#">(change view)</ViewLink>
              </div>
            </HeaderGroup>
            <HeaderGroup $gap={24}>
              <UserBlock>
                <UserName>Ivan Hanák</UserName>
                <UserMail>ivan@kontentino.com</UserMail>
              </UserBlock>
              <Separator />
              <LogoutButton type="button">LOG OUT</LogoutButton>
            </HeaderGroup>
          </Header>
          <Content>
            <Toolbar>
              <PageTitle>weekly Sales Dashboard</PageTitle>
              <Filters>
                <DateInput type="text" aria-label="Date range" defaultValue="Invalid date - Invalid date" />
                <CheckLabel htmlFor="email-summary">
                  <Checkbox id="email-summary" type="checkbox" />
                  Email me weeklyly summary
                </CheckLabel>
              </Filters>
            </Toolbar>
            <Columns>
              <section>
                <SectionTitle>Summary</SectionTitle>
                <CardStack>
                  {stats.map(({ label, value, Icon }) => (
                    <StatCard key={label}>
                      <Icon />
                      <StatText>
                        <StatLabel>{label}</StatLabel>
                        <StatValue>{value}</StatValue>
                      </StatText>
                    </StatCard>
                  ))}
                </CardStack>
              </section>
              <section>
                <SectionTitle>Charts</SectionTitle>
                <Card>
                  <ChartTitle>Revenue by country</ChartTitle>
                  <MapFrame>
                    <WorldMap />
                  </MapFrame>
                </Card>
              </section>
            </Columns>
          </Content>
        </Main>
      </Shell>
    </>
  );
}
